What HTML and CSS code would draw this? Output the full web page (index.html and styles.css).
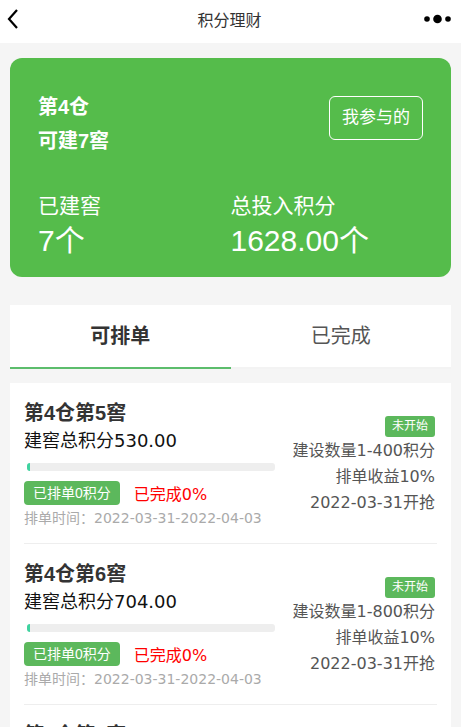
FILE: index.html
```html
<!DOCTYPE html>
<html><head><meta charset="utf-8">
<title>积分理财</title>
<link rel="stylesheet" href="styles.css">
</head>
<body>

<div class="top">
  <svg class="back" width="14" height="22" viewBox="0 0 14 22"><path d="M11 2 L3 11 L11 20" fill="none" stroke="#000" stroke-width="2.2"/></svg>
  <div class="title">积分理财</div>
  <svg class="more" width="30" height="10" viewBox="0 0 30 10"><circle cx="5" cy="5" r="2.8"/><circle cx="15.5" cy="5" r="4.3"/><circle cx="26" cy="5" r="2.8"/></svg>
</div>

<div class="cont">

<div class="summary">
  <div class="sum-head">
    <div class="sum-name">第4仓<br>可建7窖</div>
    <div class="mine">我参与的</div>
  </div>
  <div class="sum-stats">
    <div class="stat"><div class="lbl">已建窖</div><div class="val">7个</div></div>
    <div class="stat"><div class="lbl">总投入积分</div><div class="val">1628.00个</div></div>
  </div>
</div>

<div class="tabs">
  <div class="tab on">可排单</div>
  <div class="tab">已完成</div>
</div>

<div class="list">
  <div class="item">
    <div class="left">
      <div class="name">第4仓第5窖</div>
      <div class="total">建窖总积分530.00</div>
      <div class="bar"><div class="fill" style="width:1%"></div></div>
      <div class="row"><span class="tag">已排单0积分</span><span class="done">已完成0%</span></div>
      <div class="time">排单时间：2022-03-31-2022-04-03</div>
    </div>
    <div class="right">
      <span class="state">未开始</span>
      <div>建设数量1-400积分</div>
      <div>排单收益10%</div>
      <div>2022-03-31开抢</div>
    </div>
  </div>
  <div class="item">
    <div class="left">
      <div class="name">第4仓第6窖</div>
      <div class="total">建窖总积分704.00</div>
      <div class="bar"><div class="fill" style="width:1%"></div></div>
      <div class="row"><span class="tag">已排单0积分</span><span class="done">已完成0%</span></div>
      <div class="time">排单时间：2022-03-31-2022-04-03</div>
    </div>
    <div class="right">
      <span class="state">未开始</span>
      <div>建设数量1-800积分</div>
      <div>排单收益10%</div>
      <div>2022-03-31开抢</div>
    </div>
  </div>
  <div class="item">
    <div class="left">
      <div class="name">第4仓第7窖</div>
      <div class="total">建窖总积分880.00</div>
    </div>
  </div>
</div>

</div>

</body></html>
```

FILE: styles.css
```css
* {padding:0;margin:0;box-sizing:border-box;}
body {background:#f5f5f5;font-family:"Liberation Sans","Noto Sans CJK SC",sans-serif;color:#333;font-size:16px;height:727px;overflow:hidden;}

.top {height:43px;background:#fff;display:grid;grid-template-columns:1fr auto 1fr;align-items:center;padding:0 8px 5px 6px;}
.top .title {font-size:16px;color:#333;}
.back {display:block;}
.more {display:block;fill:#000;justify-self:end;margin-right:1px;}

.cont {padding:15px 10px 0;}

.summary {background:#55bc4b;border-radius:12px;color:#fff;padding:38px 28px 20px;height:219px;}
.sum-head {display:flex;justify-content:space-between;align-items:flex-start;}
.sum-name {font-size:20px;font-weight:bold;line-height:34px;margin-top:-6px;}
.mine {border:1px solid #fff;border-radius:6px;font-size:17px;padding:0 12px;line-height:42px;}
.sum-stats {display:flex;margin-top:33px;}
.stat {flex:1;}
.stat .lbl {font-size:21px;line-height:30px;}
.stat .val {font-size:30px;line-height:40px;}

.tabs {margin-top:28px;background:#fff;display:flex;height:64px;}
.tab {flex:1;text-align:center;font-size:20px;line-height:62px;color:#555;border-bottom:2px solid #f3f3f3;}
.tab.on {font-weight:bold;color:#333;border-bottom-color:#5cbd6c;}

.list {margin-top:14px;background:#fff;padding:0 14px;font-family:"DejaVu Sans","Noto Sans CJK SC",sans-serif;}
.item {display:flex;justify-content:space-between;border-bottom:1px solid #eee;padding:17px 0 18px;height:161px;}
.left {width:252px;}
.name {font-family:"Liberation Sans","Noto Sans CJK SC",sans-serif;font-size:20px;font-weight:bold;line-height:26px;color:#333;}
.total {font-size:18px;line-height:30px;color:#111;}
.bar {margin:7px 0 0 3px;height:8px;background:#eee;border-radius:3px;width:248px;overflow:hidden;}
.fill {height:100%;background:#3fd3a0;min-width:3px;}
.row {display:flex;align-items:center;margin-top:10px;}
.tag {background:#5cb85c;color:#fff;font-size:14px;border-radius:4px;padding:0 9px;line-height:24px;font-family:"Liberation Sans","Noto Sans CJK SC",sans-serif;}
.done {color:#f00;font-size:16px;margin-left:14px;}
.time {font-size:14px;color:#aaa;line-height:22px;margin-top:2px;}
.right {display:flex;flex-direction:column;align-items:flex-end;font-size:16px;color:#555;line-height:26px;padding:16px 2px 0 0;}
.state {background:#5cb85c;color:#fff;font-size:12px;border-radius:3px;padding:0 7px;line-height:21px;margin-bottom:1px;font-family:"Liberation Sans","Noto Sans CJK SC",sans-serif;}
```
